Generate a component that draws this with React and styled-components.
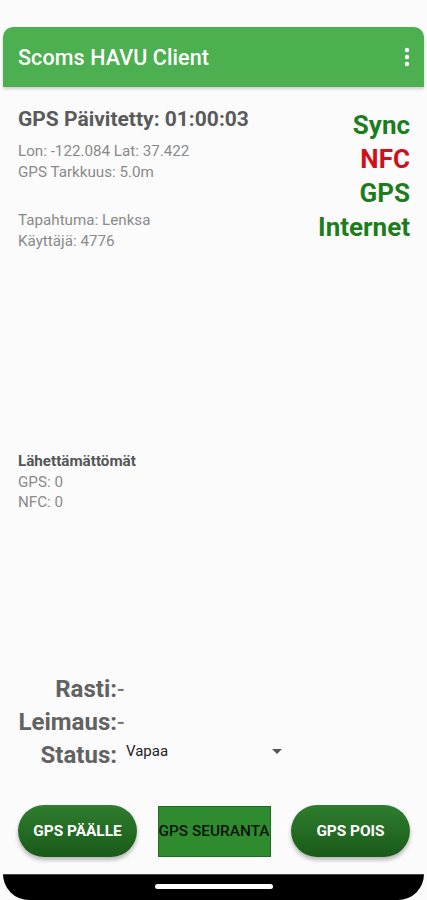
import React from "react";
import styled, { createGlobalStyle } from "styled-components";

const GlobalStyle = createGlobalStyle`
  html, body {
    margin: 0;
    padding: 0;
    background: #fbfbfb;
    font-family: Roboto, "Noto Sans", "Liberation Sans", sans-serif;
  }
`;

const Phone = styled.div`
  width: 427px;
  height: 900px;
  display: flex;
  flex-direction: column;
  background: #fbfbfb;
  overflow: hidden;
`;

const StatusBar = styled.div`
  height: 27px;
  flex-shrink: 0;
`;

const AppBar = styled.header`
  height: 60px;
  margin: 0 3px;
  flex-shrink: 0;
  display: flex;
  align-items: center;
  justify-content: space-between;
  padding: 0 14px 0 15px;
  background: #4caf50;
  border-radius: 10px 10px 0 0;
  box-shadow: 0 2px 3px rgba(0, 0, 0, 0.18);
  color: #fff;
`;

const Title = styled.h1`
  margin: 0;
  font-size: 21.5px;
  font-weight: 500;
  letter-spacing: 0.1px;
`;

const Screen = styled.main`
  flex: 1;
  display: flex;
  flex-direction: column;
  padding: 0 17px 0 18px;
`;

const TopRow = styled.section`
  display: flex;
  justify-content: space-between;
  padding-top: 20px;
`;

const InfoCol = styled.div`
  display: flex;
  flex-direction: column;
`;

const Heading = styled.div`
  font-size: 21px;
  font-weight: 700;
  color: #5a5a5a;
  line-height: 24px;
  margin-bottom: 10px;
`;

const Small = styled.div`
  font-size: 15.2px;
  line-height: 20.5px;
  color: ${(p) => (p.dark ? "#555" : "#8a8a8a")};
  font-weight: ${(p) => (p.bold ? 700 : 400)};
  margin-top: ${(p) => p.gap || 0}px;
`;

const StatusCol = styled.div`
  display: flex;
  flex-direction: column;
  align-items: flex-end;
  padding-top: 1px;
`;

const Flag = styled.div`
  font-size: 26px;
  font-weight: 700;
  line-height: 34px;
  color: ${(p) => (p.ok ? "#1d7d1d" : "#d01018")};
`;

const Pending = styled.section`
  margin-top: 200px;
  display: flex;
  flex-direction: column;
`;

const Spacer = styled.div`
  flex: 1;
`;

const Stamp = styled.section`
  display: grid;
  grid-template-columns: 99px 1fr;
  align-items: baseline;
  margin-bottom: 34px;
`;

const Label = styled.div`
  font-size: 24px;
  font-weight: 700;
  color: #626262;
  text-align: right;
  line-height: 32px;
`;

const Value = styled.div`
  font-size: 22px;
  font-weight: 500;
  color: #777;
  line-height: 32px;
`;

const Spinner = styled.div`
  display: flex;
  align-items: flex-start;
  justify-content: space-between;
  width: 156px;
  padding-left: 9px;
  font-size: 15px;
  color: #222;
  align-self: start;
  padding-top: 3px;
`;

const Caret = styled.span`
  width: 0;
  height: 0;
  border-left: 5px solid transparent;
  border-right: 5px solid transparent;
  border-top: 5px solid #555;
  margin-top: 7px;
`;

const Buttons = styled.section`
  display: flex;
  justify-content: space-between;
  align-items: center;
  margin-bottom: 17px;
`;

const PillButton = styled.button`
  width: 119px;
  height: 52px;
  border: none;
  border-radius: 26px;
  background: linear-gradient(#2f7d2f, #195a19);
  color: #fff;
  font-family: inherit;
  font-size: 15.4px;
  font-weight: 700;
  padding: 0;
  box-shadow: 0 3px 4px rgba(0, 0, 0, 0.28);
`;

const FlatButton = styled.button`
  width: 113px;
  height: 51px;
  padding: 0;
  border: 1px solid #1c6d1c;
  background: #2e8b2e;
  color: #0a140a;
  font-family: inherit;
  font-size: 15.4px;
  font-weight: 500;
  white-space: nowrap;
  overflow: hidden;
  display: flex;
  align-items: center;
  justify-content: center;
`;

const NavBar = styled.footer`
  height: 26px;
  flex-shrink: 0;
  margin: 0 3px;
  background: #000;
  border-radius: 0 0 30px 30px;
  border-top: 1px solid #444;
  display: flex;
  justify-content: center;
  padding-top: 9px;
  box-sizing: border-box;
`;

const HomePill = styled.div`
  width: 118px;
  height: 5px;
  border-radius: 3px;
  background: #fff;
`;

const MoreIcon = () => (
  <svg width="6" height="20" viewBox="0 0 6 20">
    <circle cx="3" cy="3" r="2.2" fill="#fff" />
    <circle cx="3" cy="10" r="2.2" fill="#fff" />
    <circle cx="3" cy="17" r="2.2" fill="#fff" />
  </svg>
);

export default function App() {
  return (
    <Phone>
      <GlobalStyle />
      <StatusBar />
      <AppBar>
        <Title>Scoms HAVU Client</Title>
        <MoreIcon />
      </AppBar>
      <Screen>
        <TopRow>
          <InfoCol>
            <Heading>GPS Päivitetty: 01:00:03</Heading>
            <Small>Lon: -122.084 Lat: 37.422</Small>
            <Small>GPS Tarkkuus: 5.0m</Small>
            <Small gap={28}>Tapahtuma: Lenksa</Small>
            <Small>Käyttäjä: 4776</Small>
          </InfoCol>
          <StatusCol>
            <Flag ok>Sync</Flag>
            <Flag>NFC</Flag>
            <Flag ok>GPS</Flag>
            <Flag ok>Internet</Flag>
          </StatusCol>
        </TopRow>
        <Pending>
          <Small dark bold>Lähettämättömät</Small>
          <Small>GPS: 0</Small>
          <Small>NFC: 0</Small>
        </Pending>
        <Spacer />
        <Stamp>
          <Label>Rasti:</Label>
          <Value>-</Value>
          <Label>Leimaus:</Label>
          <Value>-</Value>
          <Label>Status:</Label>
          <Spinner>
            <span>Vapaa</span>
            <Caret />
          </Spinner>
        </Stamp>
        <Buttons>
          <PillButton>GPS PÄÄLLE</PillButton>
          <FlatButton>GPS SEURANTA</FlatButton>
          <PillButton>GPS POIS</PillButton>
        </Buttons>
      </Screen>
      <NavBar>
        <HomePill />
      </NavBar>
    </Phone>
  );
}
